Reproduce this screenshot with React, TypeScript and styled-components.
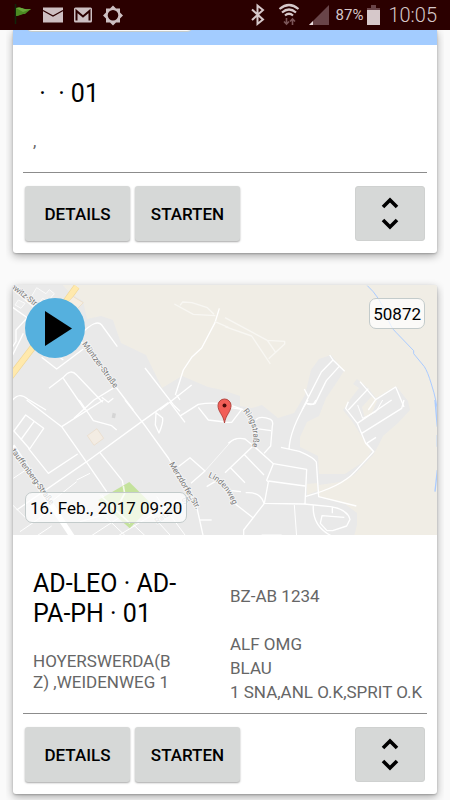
import React from "react";
import styled, { createGlobalStyle } from "styled-components";

const GlobalStyle = createGlobalStyle`
  * { box-sizing: border-box; }
  html, body, #root { height: 100%; }
  body {
    margin: 0;
    overflow: hidden;
    background: #fafafa;
    color: #000;
    font-family: Roboto, "Liberation Sans", sans-serif;
  }
`;

const Screen = styled.div`
  display: flex;
  flex-direction: column;
  height: 100vh;
`;

const StatusBar = styled.header`
  display: flex;
  flex: none;
  align-items: center;
  justify-content: space-between;
  height: 30px;
  padding: 0 13px;
  background: #2b0000;
  color: #d6c8ca;
`;

const StatusGroup = styled.div<{ $gap: number }>`
  display: flex;
  align-items: center;
  gap: ${(p) => p.$gap}px;
`;

const Battery = styled.span`
  display: flex;
  align-items: center;
  gap: 4px;
  font-size: 15px;
`;

const Clock = styled.time`
  font-size: 20px;
  font-weight: 300;
  line-height: 32px;
`;

const List = styled.main`
  display: flex;
  flex: 1;
  flex-direction: column;
  gap: 32px;
  min-height: 0;
  margin: 0 6px;
  padding: 0 7px;
  overflow: hidden;
`;

const Card = styled.article<{ $cutOff?: boolean }>`
  flex: none;
  border-radius: ${(p) => (p.$cutOff ? "0 0 3px 3px" : "3px")};
  background: #fff;
  box-shadow: 0 3px 9px rgba(0, 0, 0, 0.32), 0 1px 2px rgba(0, 0, 0, 0.2);
`;

const BlueStrip = styled.div`
  display: flex;
  align-items: flex-end;
  height: 15px;
  padding: 0 12px 13px;
  overflow: hidden;
  background: #a3ccff;
`;

const EmptyTag = styled.div`
  flex: none;
  width: 169px;
  height: 30px;
  border: 1px solid #c3cbcb;
  border-radius: 7px;
  background: #fafafa;
`;

const MapArea = styled.div`
  position: relative;
  height: 250px;
  overflow: hidden;
  border-radius: 3px 3px 0 0;
  background: #f0ede5;
`;

const MapDrawing = styled.svg`
  display: block;
  width: 100%;
  height: 100%;
`;

const PlayButton = styled.button`
  position: absolute;
  top: 13px;
  left: 12px;
  width: 60px;
  height: 60px;
  padding: 0;
  border: 0;
  border-radius: 50%;
  background: #55b0de;

  svg { display: block; }
`;

const Tag = styled.span`
  position: absolute;
  height: 31px;
  padding: 0 4px;
  border: 1px solid #c3cbcb;
  border-radius: 7px;
  background: rgba(255, 255, 255, 0.72);
  font-size: 17px;
  line-height: 31px;
  white-space: nowrap;
`;

const NumberTag = styled(Tag)`
  top: 13px;
  right: 12px;
  padding: 0 3px;
`;

const DateTag = styled(Tag)`
  bottom: 12px;
  left: 12px;
`;

const Body = styled.div`
  padding: 34px 10px 12px;
`;

const Info = styled.div`
  display: grid;
  grid-template-columns: 1fr 1fr;
  border-bottom: 1px solid #8c8c8c;
`;

const Main = styled.div`
  padding: 0 47px 20px 10px;
`;

const Title = styled.h2`
  margin: 0 0 22px;
  font-size: 25px;
  font-weight: 400;
  line-height: 30px;
  white-space: pre-wrap;
`;

const Address = styled.p`
  margin: 0;
  color: #666;
  font-size: 17px;
  line-height: 21px;
  word-break: break-all;
`;

const Facts = styled.div`
  padding: 15px 0 8px 5px;
  color: #666;
  font-size: 17px;
  line-height: 24px;
  white-space: nowrap;

  p { margin: 0; }
  p:first-child { margin-bottom: 24px; }
`;

const Actions = styled.div`
  display: flex;
  gap: 5px;
  padding: 13px 2px 0;
`;

const ActionButton = styled.button`
  width: 105px;
  height: 55px;
  padding: 0;
  border: 0;
  border-radius: 3px;
  background: #d6d8d7;
  box-shadow: 0 1px 2px rgba(0, 0, 0, 0.35);
  color: #000;
  font: 500 17px Roboto, "Liberation Sans", sans-serif;
`;

const ExpandButton = styled.button`
  display: flex;
  align-items: center;
  justify-content: center;
  width: 70px;
  height: 55px;
  margin-left: auto;
  padding: 0;
  border: 1px solid #cfd1d0;
  border-radius: 3px;
  background: #d6d8d7;
`;

function NotificationIcons() {
  return (
    <svg width="112" height="24" viewBox="13 3 112 24" aria-hidden="true">
      <path d="M15.500 4v20" stroke="#10240a" strokeWidth="1.500" />
      <path d="M16 8c5-2 6 2 15 1l-6 5c-4 0-5 2-9 2z" fill="#4b8a22" />
      <path d="M16 8c5-2 6 2 15 1l-8 3z" fill="#69a83c" />
      <rect x="43" y="7.500" width="20" height="15" fill="#cdbfc2" />
      <path d="M43 10.500l10 5.500 10-5.500" fill="none" stroke="#2b0000" strokeWidth="1.300" />
      <rect x="74" y="7.500" width="18" height="15" rx="1.500" fill="#cdbfc2" />
      <path d="M76.500 20.500V11l6.500 5.500 6.500-5.500v9.500" fill="none" stroke="#2b0000" strokeWidth="2" />
      <path
        fillRule="evenodd"
        fill="#cdbfc2"
        d="M113 5.500l3 3h4v4l3 3-3 3v4h-4l-3 3-3-3h-4v-4l-3-3 3-3v-4h4zM113 10a5.300 5.300 0 1 0 0 10.600 5.300 5.300 0 0 0 0-10.600z"
      />
    </svg>
  );
}

function ConnectionIcons() {
  return (
    <svg width="80" height="24" viewBox="250 3 80 24" aria-hidden="true">
      <path d="M252 9.500l11 10-5.500 4.500V5.500l5.500 4.500-11 10" fill="none" stroke="#d6c8ca" strokeWidth="2" />
      <g fill="none" stroke="#d6c8ca" strokeWidth="2.200">
        <path d="M279.500 9q9.500-8 19 0" />
        <path d="M282 12.500q7-6 14 0" />
        <path d="M285 15.500q4-3.500 8 0" />
      </g>
      <g fill="none" stroke="#7b5558" strokeWidth="1.600">
        <path d="M286.500 18v6M284 21.500l2.500 2.500 2.500-2.500" />
        <path d="M292.500 25v-6M290 21.500l2.500-2.500 2.500 2.500" />
      </g>
      <path d="M329 5v20h-20z" fill="#694448" />
      <path d="M313 21v4h-4z" fill="#e8dcde" />
    </svg>
  );
}

function BatteryIcon() {
  return (
    <svg width="13" height="22" viewBox="0 0 13 22" aria-hidden="true">
      <path d="M4 1h5v3h4v2H0V4h4z" fill="#694448" />
      <path d="M0 6h13v15H0z" fill="#d6c8ca" />
    </svg>
  );
}

function Chevrons() {
  return (
    <svg width="18" height="34" viewBox="0 0 18 34" fill="none" stroke="#000" strokeWidth="3.600" aria-hidden="true">
      <path d="M2 10l7-7 7 7M2 23l7 7 7-7" />
    </svg>
  );
}

/* Map tiles, each drawn in its own grid of thirds of a pixel. */
function StreetMap() {
  const nw = "translate(0 270) scale(.33333)";
  const ne = "translate(225 270) scale(.33333)";
  const sw = "translate(0 400) scale(.33333)";
  const se = "translate(225 400) scale(.33333)";
  const center = "translate(130 370) scale(.33333)";
  return (
    <MapDrawing viewBox="13 285 424 250" preserveAspectRatio="xMidYMid slice" role="img" aria-label="Karte">
      <rect x="0" y="280" width="450" height="260" fill="#f0ede5" />
      <path
        fill="#e9e9e9"
        d="M0 280H58L70 293 83 301 87 319 101 316 113 320 121 343 146 355 162 388 182 376 208 387 222 390 240 396 240 406 252 408 262 405 278 418 294 413 305 395 311 370 319 359 331 355 344 371 335 385 326 398 319 416 307 422 300 437 300 447 318 456 319 474 345 474 366 460 372 450 364 440 352 421 343 410 352 397 359 388 353 384 357 379 368 388 376 398 396 386 408 401 410 410 398 423 383 436 378 446 373 455 354 475 340 482 319 485 319 497 345 504 357 513 357 525 353 540H0z"
      />
      <path fill="#f0ede5" d="M362 407l10-11 5 5-5 12-7 6zM307 484l10-1v8l-10 4z" />
      <g fill="none" strokeLinejoin="round">
        <g transform={nw}>
          <path d="M20 335L100 230 230 50" stroke="#f0d696" strokeWidth="20" />
          <path d="M20 335L100 230 230 50" stroke="#ffe9ac" strokeWidth="16" />
          <path d="M92 83l18-30 28 18 10-12 15 12-20 24-15-10-16 22zM55 90l20 10-12 15-18-10z" stroke="#fafafa" strokeWidth="3" fill="#ededed" />
          <path d="M205 95l15-15 30 18-20 20z" fill="#f5eee2" stroke="#ecd9bd" strokeWidth="2" />
        </g>
        <g transform={nw} stroke="#fff" strokeWidth="4">
          <path d="M38 58L100 110 M38 112l45 32 M38 230l10-15v-35l32-35M70 190l-32 65" />
          <path d="M125 262l45 35 80-60M190 270l-20-15-40-60M245 190q45-45 60-25l47 65" />
          <path d="M240 210L400 420M435 294l85 110 20 20" />
          <path d="M147 355l45-35q20-25 38-5l78 82M190 325l65 95M38 390q20-25 45-3l55 33M347 350l-65 40-60 55M305 382l20 15 15-12" />
          <path d="M575 345L480 420M530 375l10 15M526 375l24-75 25-38 30-28 40-76 13-43" />
          <path d="M523 102l57 31 66 4M540 106l8-10 28 2 46 15 20 20M645 155l40 17" stroke="#f8f7f3" />
        </g>
        <g transform={ne} strokeWidth="4">
          <path d="M0 143l127 68 52 3v8l-48 44M0 170l80 28 56 84M127 211l25 36" stroke="#f8f7f3" />
          <path d="M314 255l10 15-35 36-38 74-20 40M324 270l35 34M342 290l-38 42-34 69q-15 5-24 0M238 357l13 25M405 335l47 54-22 31M430 356l-60 64M452 389l60-38 25 60" stroke="#fff" />
          <path d="M427 47q36 32 56 85 14 42 31 56l52 54v9l32 39q10 15 21 52 18 55 18 90" stroke="#aacbff" strokeWidth="3" />
        </g>
        <g transform={sw} stroke="#fff" strokeWidth="4">
          <path d="M37 138L230 430" strokeWidth="16" />
          <path d="M375 0L430 70 505 174 590 320 610 410M80 0L185 80 260 187 320 275M42 93l35-48 54 40-42 62zM62 120l40-55" />
          <path d="M505 8L425 65 260 185 50 330M185 80L310 0M85 145l60 75 88-58M238 0l42 62 55 15 15 13M300 158l67 84 5 25" />
          <path d="M40 235l45-30M160 300l70-55M230 240l40-20M60 395l80-55M110 408l45-30M38 315l40 40" strokeWidth="3" />
          <path d="M600 360h35" />
          <path d="M240 365l70-20 90 85M305 285l160 150M270 410l100-65M350 410L530 300M400 285l110 120M470 290l85 115" strokeWidth="3" />
        </g>
        <g transform={center} stroke="#fff" strokeWidth="4">
          <path d="M120 97l45 60M152 137l53-34q30-5 57-3M305 107l35 12M205 112l30 38 50 6" />
          <path d="M78 128l20 16q2 15-11 45l-11-24z" />
          <path d="M145 290l35-27 45 40-42 37M230 350l30-18" />
          <path d="M225 303l75-85q12-12 20-11" strokeWidth="2" />
        </g>
        <g transform={se} stroke="#fff" strokeWidth="4">
          <path d="M0 20l50 8-30 39H0M10 130q20-20 50-13l25 20 60 54-20 50 5 5-12 64-62 80v50M0 218l85-81M57 163l60 62M15 202l45 46M30 311l55 43" />
          <path d="M92 60q12-15 45-2 9 6 5 20l-5 60-20 22M90 85l48 7M145 191l100 17-5 103M130 243l110 15M0 270l48 5M62 278q45-3 55 32l120 2 80 8q50 8 58 38l-10 20-42 14h-17l-20-22 5-23 67 5M322 320v20M265 314q-5 65 57 95v20" />
          <path d="M168 142l55 12q43 18 51 32l7 104 113 28M192 149q2-60 57-149M245 10l20 3 8-13M240 290q110-30 150-75l56-60-24-25-25-60M370 5l-8 20 35 45L500 0M410 100L530 25 537 0M425 130l28-18M425 130l22 26" />
          <path d="M208 315l7 95M110 405h60" strokeWidth="3" />
          <path d="M398 15l15 40 40-20 20-35" strokeWidth="3" />
          <path d="M630 0l7 80M637 105v35M637 210l-7 65" stroke="#aacbff" />
        </g>
        <g transform={sw}>
          <path d="M262 107l29-21 20 29-29 21z" fill="#f3ece3" stroke="#e8dac6" strokeWidth="2" />
          <path d="M335 53l3-15 10 3-3 14z" fill="#d5d5d5" />
          <path d="M388 246l70 70-69 69-94-85z" fill="#c4e29c" />
          <path d="M370 258l4 22-20 38M300 285l90 85" stroke="#f3f8e9" strokeWidth="5" />
        </g>
        <path id="ring-street" d="M243 411Q257 427 252 448" />
        <path id="linden-way" d="M208 477Q226 484 234 508" />
      </g>
      <g fill="#777" stroke="#f3f3f3" strokeWidth="2" paintOrder="stroke" fontFamily="Roboto, sans-serif" fontSize="8">
        <text transform="translate(10 287) rotate(38)">nwitz-Straße</text>
        <text transform="translate(82 344) rotate(54)">Müntzer-Straße</text>
        <text transform="translate(11 451) rotate(54)">tauffenberg-Straße</text>
        <text transform="translate(169 464) rotate(59)">Merzdorfer Str.</text>
        <text>
          <textPath href="#linden-way">Lindenweg</textPath>
        </text>
        <text>
          <textPath href="#ring-street">Ringstraße</textPath>
        </text>
        <text transform="translate(157 524) rotate(-35)" fill="#aaa">Ratzener Str.</text>
      </g>
      <path d="M224.500 423c-1-8-6.500-11-6.500-17.500a6.500 6.500 0 0 1 13 0c0 6.500-5.500 9.500-6.500 17.500z" fill="#f25e57" stroke="#b64641" />
      <circle cx="224.500" cy="405.500" r="2" fill="#4c0b09" />
    </MapDrawing>
  );
}

interface TourProps {
  title: string;
  address: string;
  facts?: string[];
}

function TourBody({ title, address, facts = [] }: TourProps) {
  return (
    <Body>
      <Info>
        <Main>
          <Title>{title}</Title>
          <Address>{address}</Address>
        </Main>
        {facts.length > 0 && (
          <Facts>
            {facts.map((fact) => (
              <p key={fact}>{fact}</p>
            ))}
          </Facts>
        )}
      </Info>
      <Actions>
        <ActionButton type="button">DETAILS</ActionButton>
        <ActionButton type="button">STARTEN</ActionButton>
        <ExpandButton type="button" aria-label="Aufklappen">
          <Chevrons />
        </ExpandButton>
      </Actions>
    </Body>
  );
}

export default function App() {
  return (
    <Screen>
      <GlobalStyle />
      <StatusBar>
        <NotificationIcons />
        <StatusGroup $gap={8}>
          <StatusGroup $gap={6}>
            <ConnectionIcons />
            <Battery>
              87%
              <BatteryIcon />
            </Battery>
          </StatusGroup>
          <Clock>10:05</Clock>
        </StatusGroup>
      </StatusBar>
      <List>
        <Card $cutOff>
          <BlueStrip>
            <EmptyTag />
          </BlueStrip>
          <TourBody title=" ·  · 01" address="," />
        </Card>
        <Card>
          <MapArea>
            <StreetMap />
            <PlayButton type="button" aria-label="Start">
              <svg width="60" height="60" viewBox="0 0 60 60" aria-hidden="true">
                <path d="M20 13l27 17.500L20 48z" />
              </svg>
            </PlayButton>
            <NumberTag>50872</NumberTag>
            <DateTag>16. Feb., 2017 09:20</DateTag>
          </MapArea>
          <TourBody
            title="AD-LEO · AD-PA-PH · 01"
            address="HOYERSWERDA(BZ) ,WEIDENWEG 1"
            facts={["BZ-AB 1234", "ALF OMG", "BLAU", "1 SNA,ANL O.K,SPRIT O.K"]}
          />
        </Card>
      </List>
    </Screen>
  );
}
